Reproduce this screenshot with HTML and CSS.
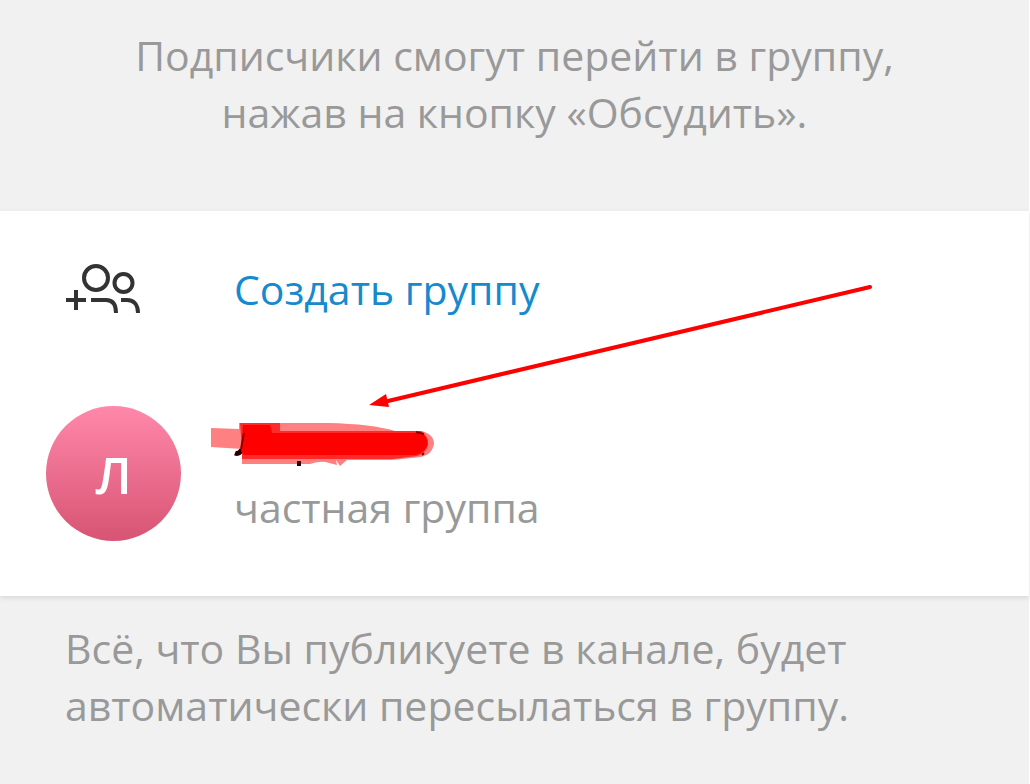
FILE: index.html
```html
<!DOCTYPE html>
<html lang="ru">
<head>
<meta charset="utf-8">
<title>Обсуждение</title>
<link rel="stylesheet" href="styles.css">
</head>
<body>
<main class="panel">
  <p class="about">Подписчики смогут перейти в группу,<br>нажав на кнопку «Обсудить».</p>
  <section class="list">
    <button class="row create" type="button">
      <span class="lead">
        <svg class="icon" viewBox="0 0 80 56" aria-hidden="true">
          <circle cx="33" cy="17" r="12"/>
          <circle cx="60.500" cy="22" r="9"/>
          <path d="M3 39H23M13 29V49"/>
          <path d="M28 39H43C50 39 53 44 53 52"/>
          <path d="M58 39H64C71 39 75 44 75 52"/>
        </svg>
      </span>
      <span>Создать группу</span>
    </button>
    <button class="row group" type="button" aria-label="частная группа">
      <span class="lead"><span class="avatar">Л</span></span>
      <span class="info">
        <svg class="redacted" viewBox="0 0 226 48" aria-hidden="true">
          <path d="M25 33Q30 35 33 27" fill="none" stroke="#210000" stroke-width="5"/>
          <path fill="#ff8080" d="M1 8L29 9V3L118 3Q162 4 185 11H211Q224 14 224 24Q222 35 211 37Q184 40 180 40H137L130 46L126 40L127 45L119 43Q112 40 100 44H32V29L1 27Z"/>
          <path fill="#ff2a2a" d="M30 3H70V11H211Q219 17 218 25Q216 33 207 36L183 39H32V30Z"/>
          <path fill="red" d="M33 5H60L62 13H211Q219 17 217 26Q214 33 205 35H34L31 31Z"/>
          <path fill="none" stroke="#8c0000" stroke-width="2" d="M206 12L214 14M214 33L212 35M31 29L34 13"/>
          <path fill="none" stroke="#300008" stroke-width="4" d="M89 41V46"/>
        </svg>
        <span class="status">частная группа</span>
      </span>
    </button>
  </section>
  <p class="note">Всё, что Вы публикуете в канале, будет<br>автоматически пересылаться в группу.</p>
  <svg class="arrow" viewBox="0 0 510 130" aria-hidden="true">
    <path d="M26 122L508 8" fill="none" stroke="red" stroke-width="4" stroke-linecap="round"/>
    <path d="M7 126L24 115L27 128Z" fill="red"/>
  </svg>
</main>
</body>
</html>
```
FILE: styles.css
```css
* {
  box-sizing: border-box;
}

body {
  margin: 0;
  background: #fff;
  color: #999;
  font: 41px/57px "Open Sans", "Noto Sans", sans-serif;
}

p {
  margin: 0;
}

.panel {
  position: relative;
  display: flex;
  flex-direction: column;
  min-height: 100vh;
  border-right: 1px solid #fff;
  background: #f1f1f1;
}

.about {
  padding: 27px 24px 70px;
  text-align: center;
}

.list {
  display: flex;
  flex-direction: column;
  gap: 42px;
  padding: 26px 0 32px;
  background: #fff;
  box-shadow: 0 2px 5px #d8d8d8;
}

.row {
  display: flex;
  align-items: center;
  width: 100%;
  padding: 0 46px;
  border: 0;
  background: none;
  color: inherit;
  font: inherit;
  text-align: left;
  cursor: pointer;
}

.create {
  height: 104px;
  color: #168acd;
}

.group {
  height: 181px;
}

.lead {
  display: flex;
  flex: none;
  width: 188px;
}

.icon {
  width: 80px;
  height: 56px;
  margin-left: 17px;
  fill: none;
  stroke: #333;
  stroke-width: 4;
}

.avatar {
  display: flex;
  align-items: center;
  justify-content: center;
  width: 135px;
  height: 135px;
  padding-top: 4px;
  border-radius: 50%;
  background: linear-gradient(#ff88aa, #d75473);
  color: #fff;
  font-size: 50px;
  font-weight: 600;
}

.info {
  display: flex;
  flex-direction: column;
  gap: 11px;
  padding-top: 8px;
}

.redacted {
  width: 226px;
  height: 48px;
  margin-left: -24px;
}

.note {
  padding: 24px 65px;
}

.arrow {
  position: absolute;
  top: 279px;
  left: 362px;
  width: 510px;
  height: 130px;
}
```
